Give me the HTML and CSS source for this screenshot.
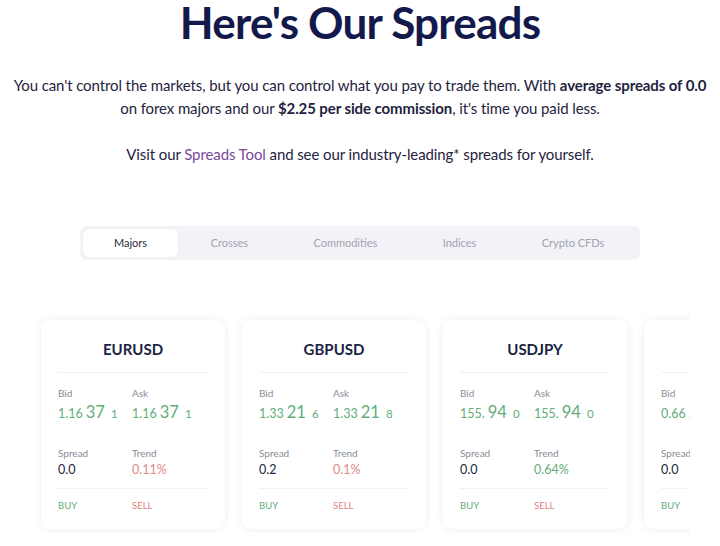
FILE: index.html
```html
<!DOCTYPE html>
<html>
<head>
<meta charset="utf-8">
<link rel="stylesheet" href="styles.css">
</head>
<body>
<section class="spreads">
  <h1 class="title">Here's Our Spreads</h1>
  <p class="intro">You can't control the markets, but you can control what you pay to trade them. With <strong>average spreads of 0.0</strong> on forex majors and our <strong>$2.25 per side commission</strong>, it's time you paid less.</p>
  <p class="intro intro-second">Visit our <a class="link" href="#">Spreads Tool</a> and see our industry-leading* spreads for yourself.</p>

  <div class="tabs">
    <div class="tab tab-active">Majors</div>
    <div class="tab">Crosses</div>
    <div class="tab">Commodities</div>
    <div class="tab">Indices</div>
    <div class="tab">Crypto CFDs</div>
  </div>

  <div class="slider">
    <div class="track">
      <div class="card">
        <div class="pair">EURUSD</div>
        <div class="grid">
          <div class="cell"><div class="label">Bid</div><div class="price"><span class="p-lead">1.16</span> <span class="p-big">37</span> <span class="p-tail">1</span></div></div>
          <div class="cell"><div class="label">Ask</div><div class="price"><span class="p-lead">1.16</span> <span class="p-big">37</span> <span class="p-tail">1</span></div></div>
        </div>
        <div class="grid grid-lower">
          <div class="cell"><div class="label">Spread</div><div class="value">0.0</div></div>
          <div class="cell"><div class="label">Trend</div><div class="value value-down">0.11%</div></div>
        </div>
        <div class="grid actions">
          <div class="buy">BUY</div>
          <div class="sell">SELL</div>
        </div>
      </div>

      <div class="card">
        <div class="pair">GBPUSD</div>
        <div class="grid">
          <div class="cell"><div class="label">Bid</div><div class="price"><span class="p-lead">1.33</span> <span class="p-big">21</span> <span class="p-tail">6</span></div></div>
          <div class="cell"><div class="label">Ask</div><div class="price"><span class="p-lead">1.33</span> <span class="p-big">21</span> <span class="p-tail">8</span></div></div>
        </div>
        <div class="grid grid-lower">
          <div class="cell"><div class="label">Spread</div><div class="value">0.2</div></div>
          <div class="cell"><div class="label">Trend</div><div class="value value-down">0.1%</div></div>
        </div>
        <div class="grid actions">
          <div class="buy">BUY</div>
          <div class="sell">SELL</div>
        </div>
      </div>

      <div class="card">
        <div class="pair">USDJPY</div>
        <div class="grid">
          <div class="cell"><div class="label">Bid</div><div class="price"><span class="p-lead">155.</span> <span class="p-big">94</span> <span class="p-tail">0</span></div></div>
          <div class="cell"><div class="label">Ask</div><div class="price"><span class="p-lead">155.</span> <span class="p-big">94</span> <span class="p-tail">0</span></div></div>
        </div>
        <div class="grid grid-lower">
          <div class="cell"><div class="label">Spread</div><div class="value">0.0</div></div>
          <div class="cell"><div class="label">Trend</div><div class="value value-up">0.64%</div></div>
        </div>
        <div class="grid actions">
          <div class="buy">BUY</div>
          <div class="sell">SELL</div>
        </div>
      </div>

      <div class="card">
        <div class="pair">AUDUSD</div>
        <div class="grid">
          <div class="cell"><div class="label">Bid</div><div class="price"><span class="p-lead">0.66</span> <span class="p-big">24</span> <span class="p-tail">3</span></div></div>
          <div class="cell"><div class="label">Ask</div><div class="price"><span class="p-lead">0.66</span> <span class="p-big">24</span> <span class="p-tail">3</span></div></div>
        </div>
        <div class="grid grid-lower">
          <div class="cell"><div class="label">Spread</div><div class="value">0.0</div></div>
          <div class="cell"><div class="label">Trend</div><div class="value value-up">0.22%</div></div>
        </div>
        <div class="grid actions">
          <div class="buy">BUY</div>
          <div class="sell">SELL</div>
        </div>
      </div>
    </div>
  </div>
</section>
</body>
</html>
```

FILE: styles.css
```css
* { box-sizing: border-box; }

html, body {
  margin: 0;
  padding: 0;
  background: #ffffff;
  font-family: Lato, "Open Sans", "Liberation Sans", sans-serif;
}

.spreads {
  display: flex;
  flex-direction: column;
  align-items: center;
  overflow: hidden;
  height: 546px;
}

.title {
  margin: 0;
  font-size: 44px;
  line-height: 1;
  font-weight: 700;
  color: #131a4b;
  letter-spacing: -0.8px;
}

.intro {
  margin: 30px 0 0;
  padding: 0 8px;
  font-size: 15px;
  line-height: 22.5px;
  letter-spacing: -0.1px;
  color: #1f2340;
  text-align: center;
}

.intro strong {
  font-weight: 700;
}

.intro-second {
  margin-top: 24px;
}

.link {
  color: #7a4a9c;
  text-decoration: none;
}

.tabs {
  margin-top: 60px;
  width: 560px;
  height: 34px;
  padding: 3px;
  display: flex;
  background: #f2f2f7;
  border-radius: 7px;
}

.tab {
  flex: 1 1 auto;
  padding: 0 28px;
  text-align: center;
  font-size: 11px;
  line-height: 28px;
  color: #a3a3b2;
  border-radius: 6px;
}

.tab-active {
  flex-grow: 0;
  width: 95px;
  background: #ffffff;
  color: #2a2d3c;
  box-shadow: 0 0 2px rgba(0, 0, 0, 0.04);
}

.slider {
  align-self: stretch;
  margin: 50px 30px 0;
  overflow: hidden;
}

.track {
  display: flex;
  gap: 17px;
  padding: 10px 11px 14px;
}

.card {
  flex: none;
  width: 184px;
  padding: 20px 17px 17px;
  background: #ffffff;
  border-radius: 9px;
  box-shadow: 0 0 10px rgba(20, 20, 60, 0.07);
}

.pair {
  font-size: 15px;
  line-height: 18px;
  font-weight: 700;
  text-align: center;
  color: #1b1f44;
  padding-bottom: 14px;
  border-bottom: 1px solid #f0f0f5;
}

.grid {
  display: grid;
  grid-template-columns: 74px 1fr;
}

.card > .grid:nth-child(2) {
  margin-top: 14px;
}

.label {
  font-size: 10px;
  line-height: 12px;
  color: #8b8b96;
}

.price {
  margin-top: 3px;
  font-size: 12px;
  line-height: 20px;
  color: #5fae78;
  white-space: nowrap;
}

.p-lead {
  font-size: 12.5px;
}

.p-big {
  font-size: 16.5px;
}

.p-tail {
  font-size: 11.5px;
  margin-left: 3px;
}

.grid-lower {
  margin-top: 23px;
  padding-bottom: 10px;
  border-bottom: 1px solid #f0f0f5;
}

.value {
  margin-top: 3px;
  font-size: 12.5px;
  line-height: 16px;
  color: #22253c;
}

.value-down {
  color: #e28787;
}

.value-up {
  color: #5fae78;
}

.actions {
  margin-top: 11px;
  font-size: 9.5px;
  line-height: 12px;
}

.buy {
  color: #5fae78;
}

.sell {
  color: #e07f7f;
}
```
